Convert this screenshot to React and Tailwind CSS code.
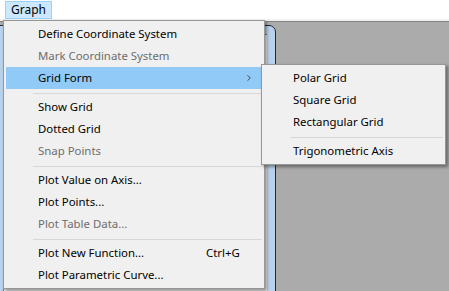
import { ChevronRight } from 'lucide-react';

const mainItems = [
  { label: 'Define Coordinate System' },
  { label: 'Mark Coordinate System', disabled: true },
  { label: 'Grid Form', sub: true, active: true },
  { sep: true },
  { label: 'Show Grid' },
  { label: 'Dotted Grid' },
  { label: 'Snap Points', disabled: true },
  { sep: true },
  { label: 'Plot Value on Axis...' },
  { label: 'Plot Points...' },
  { label: 'Plot Table Data...', disabled: true },
  { sep: true },
  { label: 'Plot New Function...', shortcut: 'Ctrl+G' },
  { label: 'Plot Parametric Curve...' },
];

const subItems = [
  { label: 'Polar Grid' },
  { label: 'Square Grid' },
  { label: 'Rectangular Grid' },
  { sep: true },
  { label: 'Trigonometric Axis' },
];

function MenuRow({ item, textPad, sepPad }) {
  if (item.sep) {
    return (
      <div className="h-[7px] pt-[4px]">
        <div className={`h-px bg-[#d7d7d7] ${sepPad}`} />
      </div>
    );
  }
  return (
    <div
      className={`h-[22px] flex items-center ${textPad} ${item.active ? 'bg-[#91c9f7]' : ''} ${
        item.disabled ? 'text-[#6d6d6d]' : 'text-black'
      }`}
    >
      <span className="w-[168px] whitespace-nowrap">{item.label}</span>
      {item.shortcut && <span className="whitespace-nowrap">{item.shortcut}</span>}
      {item.sub && (
        <span className="ml-auto mr-[8px] flex items-center text-[#222]">
          <ChevronRight size={10} strokeWidth={1.8} />
        </span>
      )}
    </div>
  );
}

export default function App() {
  return (
    <div className="relative w-[449px] h-[291px] overflow-hidden bg-[#ababab] font-['Noto_Sans',sans-serif] text-[11.4px] leading-none">
      {/* menu bar */}
      <div className="h-[19px] bg-white flex items-end pl-[5px]">
        <div className="h-[18px] px-[5px] flex items-center bg-[#cce8ff] border border-[#99d1ff] text-black text-[12px]">
          Graph
        </div>
      </div>
      <div className="h-[2px] bg-[#f0f0f0]" />
      <div className="h-px bg-[#828282]" />

      {/* child window behind the menu */}
      <div className="absolute left-[-8px] top-[25px] w-[284px] h-[300px] rounded-tr-[7px] border border-[#1b2a36] bg-[#b9d1ea]">
        <div className="absolute left-[10px] top-[8px] right-[8px] bottom-0 bg-[#f0f0f0] border-l border-t border-[#7a7a7a]" />
      </div>

      {/* main dropdown */}
      <div className="absolute left-[3px] top-[20px] w-[262px] bg-[#f0f0f0] border border-[#979797] p-[2px] shadow-[2px_2px_3px_rgba(0,0,0,0.4)]">
        {mainItems.map((item, i) => (
          <MenuRow key={i} item={item} textPad="pl-[32px]" sepPad="ml-[27px]" />
        ))}
      </div>

      {/* Grid Form submenu */}
      <div className="absolute left-[261px] top-[64px] w-[185px] bg-[#f0f0f0] border border-[#979797] p-[2px] shadow-[2px_2px_3px_rgba(0,0,0,0.4)]">
        {subItems.map((item, i) => (
          <MenuRow key={i} item={item} textPad="pl-[29px]" sepPad="ml-[26px]" />
        ))}
      </div>
    </div>
  );
}
